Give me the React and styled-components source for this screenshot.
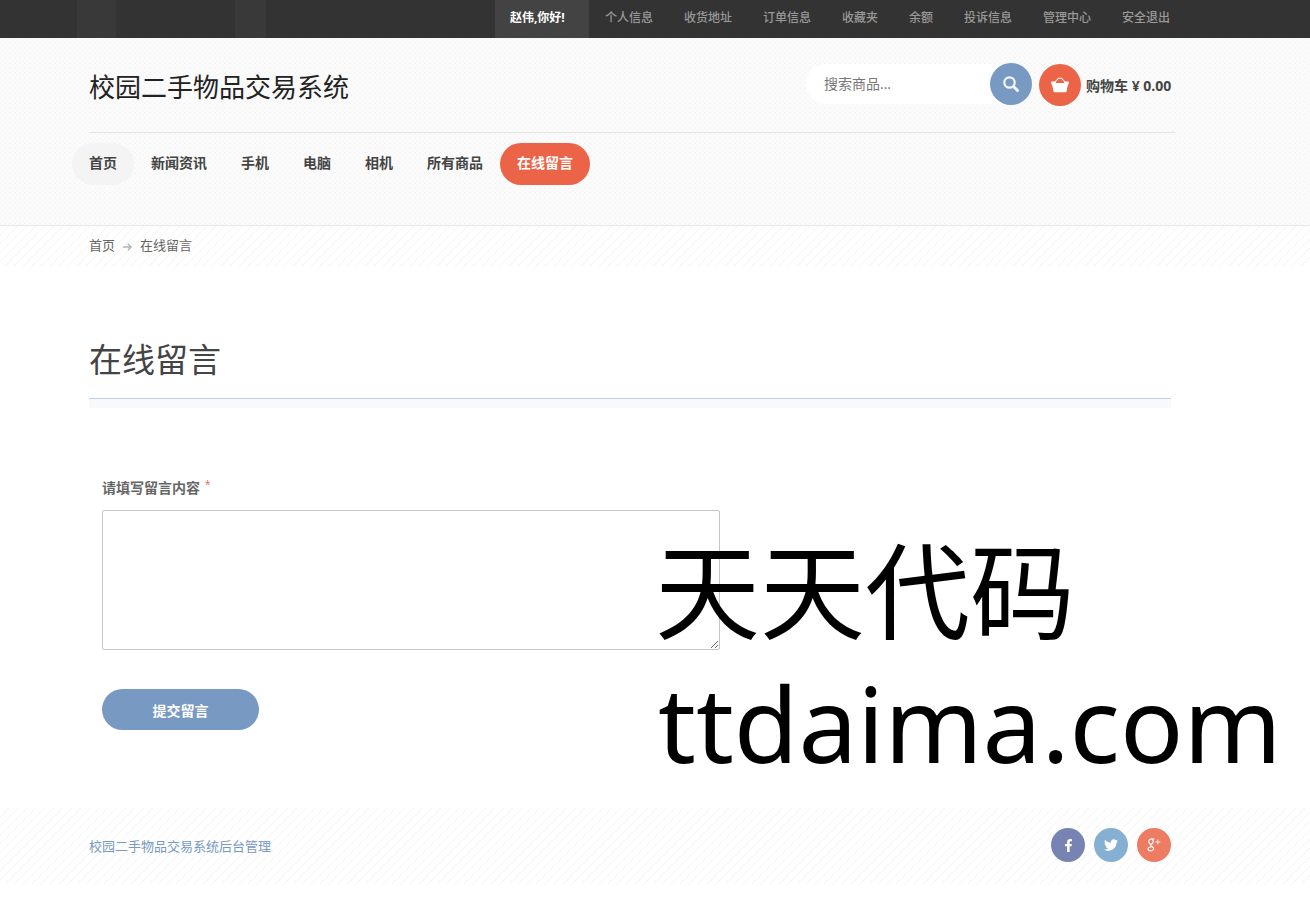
import React from 'react'
import styled, { createGlobalStyle } from 'styled-components'
import { FaFacebookF, FaTwitter } from 'react-icons/fa'

const accountLinks = ['个人信息', '收货地址', '订单信息', '收藏夹', '余额', '投诉信息', '管理中心', '安全退出']
const navLinks = ['首页', '新闻资讯', '手机', '电脑', '相机', '所有商品', '在线留言']

function App() {
    return (
        <>
            <GlobalStyle />
            <TopBar>
                <TopBlocks>
                    <TopBlock $width={39} />
                    <TopBlock $width={31} />
                </TopBlocks>
                <AccountMenu>
                    <Greeting href="#">赵伟,你好!</Greeting>
                    {accountLinks.map((text) => (
                        <AccountLink key={text} href="#">{text}</AccountLink>
                    ))}
                </AccountMenu>
            </TopBar>
            <Header>
                <HeaderRow>
                    <Logo href="#">校园二手物品交易系统</Logo>
                    <Tools>
                        <SearchForm onSubmit={(e) => e.preventDefault()}>
                            <SearchInput type="text" placeholder="搜索商品..." aria-label="搜索商品" />
                            <SearchButton type="submit" aria-label="搜索">
                                <svg width="18" height="18" viewBox="0 0 18 18" fill="none" stroke="#f4f7fb">
                                    <circle cx="7.5" cy="7.5" r="5.2" strokeWidth="2.2" />
                                    <path d="M11.8 11.8l3.7 3.7" strokeWidth="3" strokeLinecap="round" />
                                </svg>
                            </SearchButton>
                        </SearchForm>
                        <Cart href="#">
                            <CartIcon>
                                <svg width="18" height="16" viewBox="0 0 18 16">
                                    <path d="M3.5 5.500L7.500 1.200h3l4 4.300" fill="none" stroke="#fff" strokeWidth="1.1" />
                                    <path d="M.3 4.500h4.200l.5 1.500h8l.5-1.500h4.200v2.500q0 .5-.7.5l-1.400 6.500q-.2 1.200-1.200 1.200H3.600q-1 0-1.200-1.200L1 7.500q-.7 0-.7-.5z" fill="#fff" />
                                </svg>
                            </CartIcon>
                            购物车 ¥ 0.00
                        </Cart>
                    </Tools>
                </HeaderRow>
                <Nav>
                    {navLinks.map((text, i) => (
                        <NavLink key={text} href="#" $home={i === 0} $active={text === '在线留言'}>{text}</NavLink>
                    ))}
                </Nav>
            </Header>
            <Breadcrumb>
                <a href="#">首页</a>
                <BreadcrumbArrow width="9" height="8" viewBox="0 0 9 8">
                    <path d="M0 4h8M4.800 .8L8 4 4.800 7.200" />
                </BreadcrumbArrow>
                <span>在线留言</span>
            </Breadcrumb>
            <Main>
                <PageTitle>在线留言</PageTitle>
                <MessageForm onSubmit={(e) => e.preventDefault()}>
                    <Label htmlFor="message">
                        请填写留言内容<Required>*</Required>
                    </Label>
                    <Message id="message" />
                    <Submit type="submit">提交留言</Submit>
                </MessageForm>
            </Main>
            <Footer>
                <FooterLink href="#">校园二手物品交易系统后台管理</FooterLink>
                <Social>
                    <SocialLink href="#" aria-label="Facebook" $color="#7783b3"><FaFacebookF size={13} /></SocialLink>
                    <SocialLink href="#" aria-label="Twitter" $color="#86b0d2"><FaTwitter size={14} /></SocialLink>
                    <SocialLink href="#" aria-label="Google Plus" $color="#ee7c62">
                        {/* two-storey g with a small plus */}
                        <svg width="14" height="14" viewBox="0 0 14 14" fill="none" stroke="#fff">
                            <ellipse cx="4" cy="3.600" rx="2.200" ry="2.600" strokeWidth="1.200" />
                            <path d="M4 1h3.500M5 6.200c-2 .8-1.600 1.400-.2 2.200 1.800 1 2.200 1.800 1.800 3-.6 1.900-5.200 2-5.600 0-.3-1.800 1.600-2.600 3.800-2.600" strokeWidth="1.100" />
                            <path d="M10.800 1.500v5M8.300 4h5" strokeWidth=".9" />
                        </svg>
                    </SocialLink>
                </Social>
            </Footer>
            <Watermark>
                <div>天天代码</div>
                <WatermarkUrl>ttdaima.com</WatermarkUrl>
            </Watermark>
        </>
    )
}

export default App

const GlobalStyle = createGlobalStyle`
    * {
        box-sizing: border-box;
    }

    body {
        margin: 0;
        position: relative;
        background: #fff;
        color: #666;
        font-family: "Open Sans", "Noto Sans CJK SC", sans-serif;
        font-size: 13px;
        overflow-x: hidden;
    }

    a {
        color: inherit;
        text-decoration: none;
    }
`

const stripes = `
    background-color: #fff;
    background-image: linear-gradient(135deg, transparent 45%, #f3f3f3 45%, #f3f3f3 55%, transparent 55%);
    background-size: 9px 9px;
`

const TopBar = styled.div`
    display: flex;
    justify-content: space-between;
    height: 38px;
    padding: 0 125px 0 77px;
    background: #333;
`

const TopBlocks = styled.div`
    display: flex;
    gap: 119px;
`

const TopBlock = styled.span`
    width: ${(p) => p.$width}px;
    background: #393939;
`

const AccountMenu = styled.nav`
    display: flex;
    gap: 1px;
`

const AccountLink = styled.a`
    padding: 0 15px;
    line-height: 35px;
    font-size: 12px;
    font-weight: 500;
    color: #999;
    white-space: nowrap;
`

const Greeting = styled(AccountLink)`
    width: 94px;
    background: #434343;
    color: #fff;
    font-weight: bold;
`

const Header = styled.header`
    padding: 0 135px 40px 89px;
    background-color: #fcfcfc;
    background-image:
        linear-gradient(45deg, transparent 44%, #f6f6f6 44%, #f6f6f6 56%, transparent 56%),
        linear-gradient(135deg, transparent 44%, #f6f6f6 44%, #f6f6f6 56%, transparent 56%);
    background-size: 5px 5px;
    border-bottom: 1px solid #e9e9e9;
`

const HeaderRow = styled.div`
    display: flex;
    justify-content: space-between;
    height: 95px;
    border-bottom: 1px solid #e4e4e4;
`

const Logo = styled.a`
    line-height: 98px;
    font-size: 26px;
    color: #222;
`

const Tools = styled.div`
    display: flex;
    align-items: flex-start;
    gap: 7px;
    padding-top: 25px;
`

const SearchForm = styled.form`
    display: flex;
    align-items: center;
    width: 226px;
    height: 42px;
`

const SearchInput = styled.input`
    flex: 1;
    min-width: 0;
    height: 40px;
    margin-right: -21px;
    padding: 0 30px 2px 18px;
    border: 0;
    border-radius: 20px 0 0 20px;
    outline: none;
    background: #fff;
    font: inherit;
    font-size: 14px;

    &::placeholder {
        color: #777;
    }
`

const SearchButton = styled.button`
    display: flex;
    align-items: center;
    justify-content: center;
    width: 42px;
    height: 42px;
    padding: 0;
    border: 0;
    border-radius: 50%;
    background: #7799c2;
    cursor: pointer;
`

const Cart = styled.a`
    display: flex;
    align-items: center;
    gap: 5px;
    min-width: 136px;
    padding-top: 1px;
    font-size: 14px;
    font-weight: bold;
    color: #444;
    white-space: nowrap;
`

const CartIcon = styled.span`
    display: flex;
    align-items: center;
    justify-content: center;
    width: 42px;
    height: 42px;
    border-radius: 50%;
    background: #ec6448;
`

const Nav = styled.nav`
    display: flex;
    margin: 10px 0 0 -17px;
`

const NavLink = styled.a`
    height: 42px;
    padding: 0 17px;
    border-radius: 21px;
    line-height: 40px;
    font-size: 14px;
    font-weight: bold;
    color: ${(p) => (p.$active ? '#fff' : '#444')};
    background: ${(p) => (p.$active ? '#ec6448' : p.$home ? '#f4f4f4' : 'none')};
`

const Breadcrumb = styled.div`
    display: flex;
    gap: 8px;
    height: 40px;
    padding: 0 135px 0 89px;
    line-height: 38px;
    ${stripes}
`

const BreadcrumbArrow = styled.svg`
    margin-top: 17px;
    fill: none;
    stroke: #b5b5b5;
    stroke-width: 1.5;
`

const Main = styled.main`
    padding: 70px 139px 78px 89px;
`

const PageTitle = styled.h1`
    margin: 0;
    padding-bottom: 14px;
    border-bottom: 1px solid #b8d0ea;
    box-shadow: 0 9px 0 #f8f9fa;
    line-height: 48px;
    font-size: 33px;
    font-weight: normal;
    color: #444;
`

const MessageForm = styled.form`
    display: flex;
    flex-direction: column;
    align-items: flex-start;
    padding: 78px 0 0 13px;
`

const Label = styled.label`
    display: flex;
    line-height: 22px;
    font-size: 14px;
    font-weight: bold;
    color: #666;
`

const Required = styled.span`
    padding-left: 5px;
    line-height: 14px;
    font-size: 10px;
    font-weight: normal;
    color: #ec6448;
`

const Message = styled.textarea`
    width: 618px;
    max-width: 100%;
    height: 140px;
    margin: 11px 0 39px;
    border: 1px solid #c6c6c6;
    border-radius: 2px;
    font: inherit;
`

const Submit = styled.button`
    width: 157px;
    height: 41px;
    padding: 0;
    border: 0;
    border-radius: 21px;
    background: #7799c2;
    font: inherit;
    font-size: 14px;
    font-weight: bold;
    color: #fff;
    cursor: pointer;
`

const Footer = styled.footer`
    display: flex;
    align-items: center;
    justify-content: space-between;
    height: 76px;
    padding: 0 139px 2px 89px;
    ${stripes}
`

const FooterLink = styled.a`
    color: #7799c2;
`

const Social = styled.div`
    display: flex;
    gap: 9px;
`

const SocialLink = styled.a`
    display: flex;
    align-items: center;
    justify-content: center;
    width: 34px;
    height: 34px;
    border-radius: 50%;
    background: ${(p) => p.$color};
    color: #fff;
`

const Watermark = styled.div`
    position: absolute;
    top: 525px;
    left: 655px;
    line-height: 132px;
    font-size: 105px;
    color: #000;
    white-space: nowrap;
    pointer-events: none;
`

const WatermarkUrl = styled.div`
    padding-left: 3px;
    font-family: "Noto Sans", sans-serif;
`
